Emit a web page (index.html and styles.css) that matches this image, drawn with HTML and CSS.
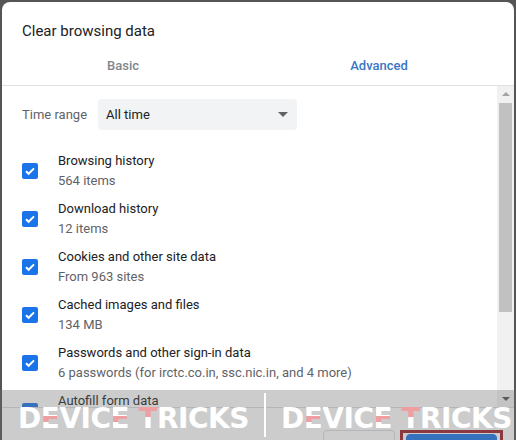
FILE: index.html
```html
<!DOCTYPE html>
<html lang="en">
<head>
  <meta charset="UTF-8" />
  <meta name="viewport" content="width=device-width, initial-scale=1.0" />
  <title>Clear browsing data</title>
  <link rel="stylesheet" href="styles.css">
</head>
<body>
  <div class="dialog">
    <h1 class="title">Clear browsing data</h1>

    <div class="tabs">
      <div class="tab">Basic</div>
      <div class="tab active">Advanced</div>
    </div>

    <div class="body">
      <div class="content">
        <div class="range-row">
          <span class="range-label">Time range</span>
          <div class="select">
            <span>All time</span>
            <span class="caret"></span>
          </div>
        </div>

        <div class="item">
          <span class="check"><svg viewBox="0 0 16 16"><path d="M4 8.2l2.6 2.6L12 5.4" /></svg></span>
          <div class="item-text">
            <div class="item-label">Browsing history</div>
            <div class="item-sub">564 items</div>
          </div>
        </div>
        <div class="item">
          <span class="check"><svg viewBox="0 0 16 16"><path d="M4 8.2l2.6 2.6L12 5.4" /></svg></span>
          <div class="item-text">
            <div class="item-label">Download history</div>
            <div class="item-sub">12 items</div>
          </div>
        </div>
        <div class="item">
          <span class="check"><svg viewBox="0 0 16 16"><path d="M4 8.2l2.6 2.6L12 5.4" /></svg></span>
          <div class="item-text">
            <div class="item-label">Cookies and other site data</div>
            <div class="item-sub">From 963 sites</div>
          </div>
        </div>
        <div class="item">
          <span class="check"><svg viewBox="0 0 16 16"><path d="M4 8.2l2.6 2.6L12 5.4" /></svg></span>
          <div class="item-text">
            <div class="item-label">Cached images and files</div>
            <div class="item-sub">134 MB</div>
          </div>
        </div>
        <div class="item">
          <span class="check"><svg viewBox="0 0 16 16"><path d="M4 8.2l2.6 2.6L12 5.4" /></svg></span>
          <div class="item-text">
            <div class="item-label">Passwords and other sign-in data</div>
            <div class="item-sub">6 passwords (for irctc.co.in, ssc.nic.in, and 4 more)</div>
          </div>
        </div>
        <div class="item">
          <span class="check"><svg viewBox="0 0 16 16"><path d="M4 8.2l2.6 2.6L12 5.4" /></svg></span>
          <div class="item-text">
            <div class="item-label">Autofill form data</div>
            <div class="item-sub">&nbsp;</div>
          </div>
        </div>
      </div>

      <div class="scrollbar">
        <div class="sb-arrow"><span class="sb-up"></span></div>
        <div class="sb-thumb"></div>
        <div class="sb-rest"></div>
        <div class="sb-arrow"><span class="sb-down"></span></div>
      </div>
    </div>

    <div class="footer">
      <button class="btn">Cancel</button>
      <span class="highlight"><button class="btn primary">Clear data</button></span>
    </div>
  </div>

  <div class="watermark">
    <span class="wm-text">D<span class="e">E</span>VIC<span class="e">E</span> <span class="t">T</span>RICKS</span>
    <span class="wm-divider"></span>
    <span class="wm-text">D<span class="e">E</span>VIC<span class="e">E</span> <span class="t">T</span>RICKS</span>
  </div>
</body>
</html>
```

FILE: styles.css
```css
body {
  margin: 0;
  background: #555;
  font-family: Roboto, "Liberation Sans", sans-serif;
  color: #202124;
  height: 440px;
  overflow: hidden;
}

.dialog {
  margin: 2px 2px 0 2px;
  width: 512px;
  height: 438px;
  background: #fff;
  border-radius: 8px 8px 0 0;
  overflow: hidden;
  display: flex;
  flex-direction: column;
}

.title {
  margin: 0;
  padding: 17px 20px 0 20px;
  font-size: 15px;
  font-weight: 400;
  line-height: 24px;
}

.tabs {
  display: grid;
  grid-template-columns: 256px 256px;
  margin-left: -7px;
  height: 42px;
}

.tab {
  text-align: center;
  padding-top: 4px;
  line-height: 38px;
  font-size: 13px;
  font-weight: 500;
  color: #80868b;
}

.tab.active {
  color: #3a76c4;
}

.body {
  display: flex;
  border-top: 1px solid #e0e0e0;
  height: 321px;
}

.content {
  flex: 1;
  overflow: hidden;
  padding: 13px 0 0 20px;
}

.range-row {
  display: flex;
  align-items: center;
  gap: 11px;
  margin-bottom: 17px;
}

.range-label {
  font-size: 13px;
  color: #5f6368;
}

.select {
  width: 199px;
  height: 31px;
  box-sizing: border-box;
  background: #f1f3f4;
  border-radius: 4px;
  display: flex;
  align-items: center;
  justify-content: space-between;
  padding: 0 9px 0 8px;
  font-size: 13px;
}

.caret {
  width: 0;
  height: 0;
  border-left: 5px solid transparent;
  border-right: 5px solid transparent;
  border-top: 5px solid #5f6368;
}

.item {
  display: flex;
  align-items: center;
  gap: 20px;
  padding: 4px 0;
}

.check {
  width: 16px;
  height: 16px;
  border-radius: 2px;
  background: #1a73e8;
  flex: none;
  display: flex;
}

.check svg {
  width: 16px;
  height: 16px;
  fill: none;
  stroke: #fff;
  stroke-width: 2;
}

.item-text {
  font-size: 13px;
  line-height: 20px;
}

.item-sub {
  color: #5f6368;
}

.scrollbar {
  width: 17px;
  background: #f1f1f1;
  display: flex;
  flex-direction: column;
}

.sb-arrow {
  height: 16px;
  display: flex;
  align-items: center;
  justify-content: center;
}

.sb-up,
.sb-down {
  width: 0;
  height: 0;
  border-left: 4px solid transparent;
  border-right: 4px solid transparent;
}

.sb-up {
  border-bottom: 4px solid #a3a3a3;
}

.sb-down {
  border-top: 4px solid #505050;
}

.sb-thumb {
  height: 209px;
  margin: 1px 2px 0 2px;
  background: #c1c1c1;
}

.sb-rest {
  flex: 1;
}

.footer {
  border-top: 1px solid #dadce0;
  display: flex;
  justify-content: flex-end;
  align-items: flex-start;
  gap: 5px;
  padding: 22px 11px 0 0;
}

.btn {
  font-family: inherit;
  font-size: 13px;
  font-weight: 500;
  height: 32px;
  width: 72px;
  border: 1px solid #dadce0;
  border-radius: 4px;
  background: #fff;
  color: #1a73e8;
}

.highlight {
  border: 3px solid #9b1d26;
  padding: 1px 3px;
}

.btn.primary {
  width: 91px;
  background: #1a73e8;
  border-color: #1a73e8;
  color: #fff;
}

.watermark {
  position: absolute;
  left: 0;
  top: 390px;
  width: 516px;
  height: 50px;
  background: rgba(110, 110, 110, 0.35);
  display: flex;
  align-items: center;
  gap: 15px;
  padding-left: 18px;
  box-sizing: border-box;
}

.wm-text {
  font-family: "DejaVu Sans", sans-serif;
  font-weight: 700;
  font-size: 28px;
  letter-spacing: -0.5px;
  color: #fff;
  white-space: nowrap;
  margin-top: 6px;
}

.wm-text .e {
  background: linear-gradient(#fff 0 42%, #ef9ea2 42% 62%, #fff 62%);
  -webkit-background-clip: text;
  background-clip: text;
  color: transparent;
}

.wm-text .t {
  background: linear-gradient(#ef9ea2 0 45%, #fff 45%);
  -webkit-background-clip: text;
  background-clip: text;
  color: transparent;
}

.wm-divider {
  width: 2px;
  height: 44px;
  background: #fff;
  flex: none;
}
```
